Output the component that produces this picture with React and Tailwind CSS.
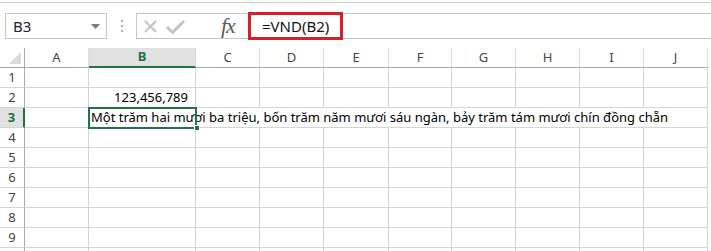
import React from 'react'

const cols = [
  { key: 'A', w: 'w-[64px]' },
  { key: 'B', w: 'w-[107px]' },
  { key: 'C', w: 'w-[64px]' },
  { key: 'D', w: 'w-[64px]' },
  { key: 'E', w: 'w-[65px]' },
  { key: 'F', w: 'w-[63px]' },
  { key: 'G', w: 'w-[64px]' },
  { key: 'H', w: 'w-[64px]' },
  { key: 'I', w: 'w-[64px]' },
  { key: 'J', w: 'w-[64px]' },
]

// row 10 only peeks in at the bottom edge, its number is out of view
const rows = [1, 2, 3, 4, 5, 6, 7, 8, 9, 10]

const longText =
  'Một trăm hai mươi ba triệu, bốn trăm năm mươi sáu ngàn, bảy trăm tám mươi chín đồng chẵn'

const FormulaBar = () => (
  <div className="flex items-stretch h-[26px] mt-[10px]">
    {/* Name box */}
    <div className="ml-[5px] w-[102px] border border-[#c6c6c6] flex items-center justify-between pl-[7px] pr-[6px]">
      <span className="text-[15px] text-[#222]">B3</span>
      <svg width="9" height="5" viewBox="0 0 9 5">
        <polygon points="0,0 9,0 4.5,5" fill="#7a7a7a" />
      </svg>
    </div>

    {/* grip dots */}
    <div className="w-[29px] flex flex-col items-center justify-center gap-[3px]">
      <span className="w-[2px] h-[2px] bg-[#b0b0b0]" />
      <span className="w-[2px] h-[2px] bg-[#b0b0b0]" />
      <span className="w-[2px] h-[2px] bg-[#b0b0b0]" />
    </div>

    {/* cancel / enter / fx */}
    <div className="w-[112px] border border-[#c6c6c6] border-r-0 flex items-center">
      <svg className="ml-[7px]" width="13" height="13" viewBox="0 0 13 13">
        <path d="M1 1 L12 12 M12 1 L1 12" stroke="#c4c4c4" strokeWidth="2" fill="none" />
      </svg>
      <svg className="ml-[9px] mt-[2px]" width="19" height="14" viewBox="0 0 19 14">
        <path d="M1 7 L6.5 12.5 L18 1" stroke="#c4c4c4" strokeWidth="3" fill="none" />
      </svg>
      <span className="ml-[36px] mb-[1px] font-['Liberation_Serif',serif] italic text-[22px] leading-none text-[#5a5a5a] tracking-[-1px]">
        fx
      </span>
    </div>

    {/* formula input */}
    <div className="flex-1 border-y border-[#c6c6c6] flex items-center">
      <div className="w-[95px] h-[28px] shrink-0 border-[3px] border-[#d5202a] flex items-center pl-[11px]">
        <span className="text-[15px] text-[#111] leading-none">=VND(B2)</span>
      </div>
    </div>
  </div>
)

export default function App() {
  return (
    <div className="w-[711px] h-[251px] overflow-hidden bg-white font-['Noto_Sans','Liberation_Sans',sans-serif]">
      <div className="h-[2px]" />
      <div className="h-px bg-[#d0d0d0]" />
      <FormulaBar />
      <div className="h-[9px]" />

      {/* sheet */}
      <div className="relative">
        {/* column header */}
        <div className="flex h-[20px]">
          <div className="w-[25px] shrink-0 border-r border-b border-[#ababab] flex items-end justify-end pr-[3px] pb-[3px]">
            <svg width="12" height="12" viewBox="0 0 12 12">
              <polygon points="12,0 12,12 0,12" fill="#dadada" />
            </svg>
          </div>
          {cols.map((c) =>
            c.key === 'B' ? (
              <div
                key={c.key}
                className={`${c.w} shrink-0 bg-[#e1e1e1] border-r border-[#d4d4d4] border-b-2 border-b-[#217346] flex items-center justify-center text-[13px] font-bold text-[#217346]`}
              >
                {c.key}
              </div>
            ) : (
              <div
                key={c.key}
                className={`${c.w} shrink-0 border-r border-[#dcdcdc] border-b border-b-[#ababab] flex items-center justify-center text-[13px] text-[#444]`}
              >
                {c.key}
              </div>
            )
          )}
        </div>

        {/* rows */}
        {rows.map((r) => (
          <div key={r} className="flex h-[20px]">
            <div
              className={
                r === 3
                  ? 'w-[25px] shrink-0 bg-[#e1e1e1] border-r-2 border-r-[#217346] border-b border-b-[#d4d4d4] flex items-center justify-center text-[13px] font-bold text-[#217346]'
                  : 'w-[25px] shrink-0 border-r border-r-[#ababab] border-b border-b-[#d4d4d4] flex items-center justify-center text-[13px] text-[#444]'
              }
            >
              {r < 10 ? r : null}
            </div>
            {cols.map((c, i) => {
              const overflowed = r === 3 && i >= 1
              return (
                <div
                  key={c.key}
                  className={`${c.w} shrink-0 border-b border-[#d4d4d4] ${
                    overflowed && c.key !== 'J' ? 'border-r-0' : 'border-r'
                  } ${r === 3 && i === 1 ? 'relative z-10' : ''} flex items-center text-[13px] text-black`}
                >
                  {r === 2 && c.key === 'B' && <span className="ml-auto pr-[7px]">123,456,789</span>}
                  {r === 3 && c.key === 'B' && (
                    <span className="pl-[2px] whitespace-nowrap">{longText}</span>
                  )}
                </div>
              )
            })}
          </div>
        ))}

        {/* active cell B3 */}
        <div className="absolute left-[88px] top-[59px] w-[109px] h-[22px] border-2 border-[#217346] pointer-events-none z-20" />
        <div className="absolute left-[194px] top-[77px] w-[6px] h-[6px] bg-[#217346] border border-white z-20" />
      </div>
    </div>
  )
}
